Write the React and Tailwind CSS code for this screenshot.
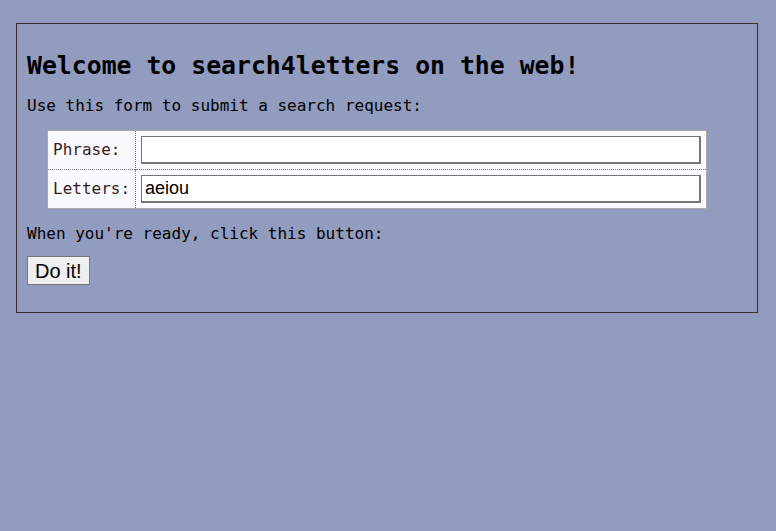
export default function App() {
  const mono = { fontFamily: '"DejaVu Sans Mono", monospace' };
  return (
    <div className="min-h-[531px] w-full bg-[#919cbe] pt-[23px] pl-[16px]" style={mono}>
      <div className="w-[742px] h-[290px] border border-[#3a2f2f] px-[10px] pt-[10px]">
        <h1 className="mt-[17px] text-[24.8px] leading-[30px] font-bold text-black">
          Welcome to search4letters on the web!
        </h1>
        <p className="mt-[15px] text-[16px] leading-[20px] text-black">
          Use this form to submit a search request:
        </p>
        <table className="mt-[14px] ml-[20px] w-[660px] border border-[#a9a9a9] bg-[#f8faff] border-collapse">
          <tbody>
            <tr className="border-b border-dotted border-[#808080]">
              <td className="w-[88px] px-[5px] text-[16px] text-[#3a1a24] border-r border-dotted border-[#808080] h-[38px]">
                Phrase:
              </td>
              <td className="px-[5px] py-[5px]">
                <input
                  className="block w-full h-[28px] bg-white border-t border-l border-r-2 border-b-2 border-[#767676] px-[3px] text-[18px]"
                  style={{ fontFamily: '"Liberation Sans", Arial, sans-serif' }}
                  defaultValue=""
                />
              </td>
            </tr>
            <tr>
              <td className="w-[88px] px-[5px] text-[16px] text-[#3a1a24] border-r border-dotted border-[#808080] h-[38px]">
                Letters:
              </td>
              <td className="px-[5px] py-[5px]">
                <input
                  className="block w-full h-[28px] bg-white border-t border-l border-r-2 border-b-2 border-[#767676] px-[3px] text-[18px] text-black"
                  style={{ fontFamily: '"Liberation Sans", Arial, sans-serif' }}
                  defaultValue="aeiou"
                />
              </td>
            </tr>
          </tbody>
        </table>
        <p className="mt-[15px] text-[16px] leading-[20px] text-black">
          When you're ready, click this button:
        </p>
        <button
          className="block mt-[12px] h-[29px] px-[7px] bg-[#efefef] border border-[#767676] text-[20px] leading-[24px] text-black"
          style={{ fontFamily: '"Liberation Sans", Arial, sans-serif' }}
        >
          Do it!
        </button>
      </div>
    </div>
  );
}
